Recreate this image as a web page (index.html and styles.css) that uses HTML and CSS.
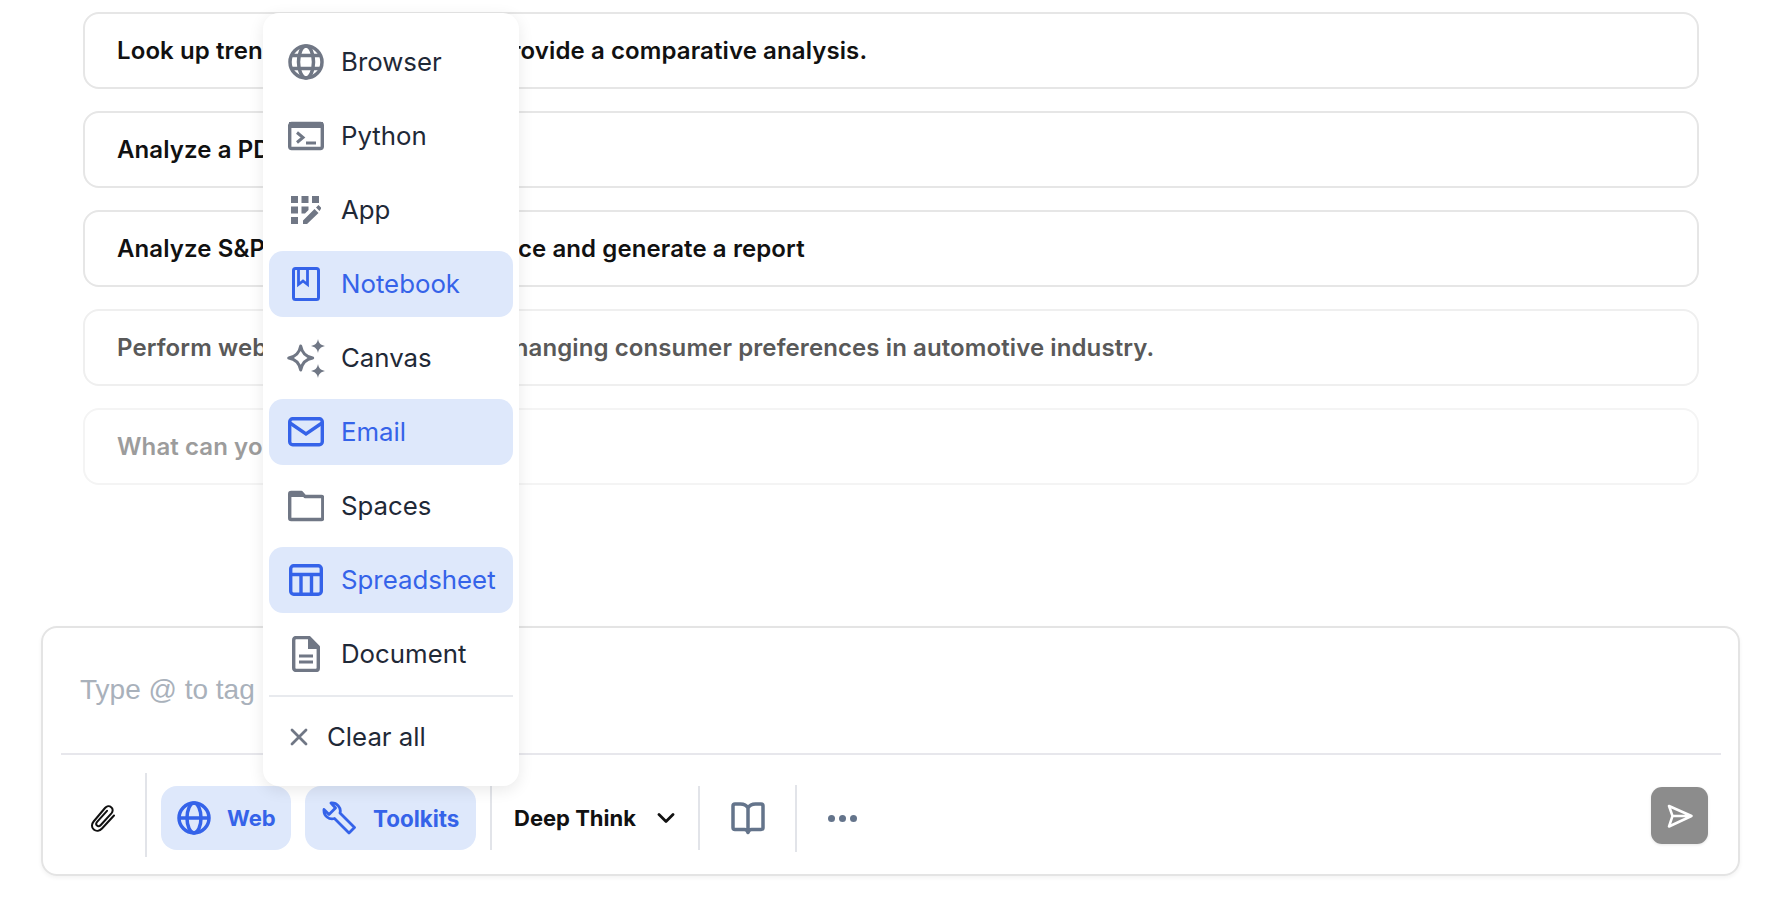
FILE: index.html
```html
<!DOCTYPE html>
<html lang="en">
<head>
<meta charset="utf-8">
<title>Chat composer</title>
<link rel="stylesheet" href="styles.css">
</head>
<body>
<main class="page">
  <section class="suggestions">
    <div class="card"><span class="card-text">Look up trends in EV stocks and provide a comparative analysis.</span></div>
    <div class="card"><span class="card-text">Analyze a PDF report</span></div>
    <div class="card"><span class="card-text">Analyze S&amp;P 500 stock performance and generate a report</span></div>
    <div class="card fade-1"><span class="card-text">Perform web research about the changing consumer preferences in automotive industry.</span></div>
    <div class="card fade-2"><span class="card-text">What can you do?</span></div>
  </section>

  <section class="composer">
    <div class="input-area"><span class="placeholder">Type @ to tag</span></div>
    <div class="toolbar">
      <button class="icon-btn clip" aria-label="Attach">
        <svg class="i-clip" viewBox="0 0 26 28" fill="none" stroke="#111" stroke-width="2" stroke-linecap="round" stroke-linejoin="round"><path d="M24 11.500 12 24.500c-2.300 2.500-5.800 3-8.200 1-2.400-2-2.400-5.500-.2-8L15 4c1.700-2 4.300-2.400 6.200-.8 1.900 1.500 1.900 4.100.2 6.100L10.800 21c-1.100 1.300-2.700 1.600-3.800.6-1.100-1-1-2.500.1-3.800L17 6.800"/></svg>
      </button>
      <span class="sep sep-tall"></span>
      <button class="pill web">
        <svg class="i-web" viewBox="0 0 34 34" fill="none" stroke="currentColor" stroke-width="3.500"><circle cx="17" cy="17" r="15"/><ellipse cx="17" cy="17" rx="7" ry="15"/><path d="M2 17h30"/></svg>
        <span>Web</span>
      </button>
      <button class="pill toolkits">
        <svg class="i-wrench" viewBox="0 0 34 34" fill="none" stroke="currentColor" stroke-width="2.800" stroke-linejoin="round"><path d="M18 12 32.500 26.500 27 32 12.500 17.500C7 19 1.500 15 2 8.500L7 13.500 13.500 7 9 2C15 1.500 19.500 7 18 12Z"/></svg>
        <span>Toolkits</span>
      </button>
      <span class="sep sep-a"></span>
      <button class="model">
        <span>Deep Think</span>
        <svg class="i-chev" viewBox="0 0 18 10" fill="none" stroke="#111" stroke-width="2.800" stroke-linecap="round" stroke-linejoin="round"><path d="m2 1.500 7 7 7-7"/></svg>
      </button>
      <span class="sep sep-b"></span>
      <button class="icon-btn book" aria-label="Library">
        <svg class="i-book" viewBox="0 0 34 33" fill="none" stroke="#64748b" stroke-width="3.500" stroke-linejoin="round"><path d="M17 6C15.500 3.300 13 2 9.500 2H4c-1.200 0-2 .8-2 2v21.500c0 1.200.8 2 2 2h9.500c1.800 0 3 .8 3.500 3 .5-2.200 1.700-3 3.500-3H30c1.200 0 2-.8 2-2V4c0-1.200-.8-2-2-2h-5.500C21 2 18.500 3.300 17 6Zm0 0v24"/></svg>
      </button>
      <span class="sep sep-c"></span>
      <button class="icon-btn more" aria-label="More">
        <span class="dot"></span><span class="dot"></span><span class="dot"></span>
      </button>
      <button class="send" aria-label="Send">
        <svg class="i-send" viewBox="0 0 26 24" fill="none" stroke="#fff" stroke-width="2.500" stroke-linecap="round" stroke-linejoin="round"><path d="M2 2 24.500 12 2 22.500 5.500 12ZM5.500 12h19"/></svg>
      </button>
    </div>
  </section>
</main>

<nav class="menu">
  <a class="item">
    <span class="ico"><svg class="s36" viewBox="0 0 36 36" fill="none" stroke="currentColor" stroke-width="3.500"><circle cx="18" cy="18" r="16"/><ellipse cx="18" cy="18" rx="7.500" ry="16"/><path d="M3.500 11.500h29M3.500 24.500h29"/></svg></span>
    <span class="label">Browser</span>
  </a>
  <a class="item">
    <span class="ico"><svg class="s36" viewBox="0 0 36 30" fill="none"><rect x="1.700" y="2.500" width="32.600" height="25" rx="2" stroke="currentColor" stroke-width="3.400"/><path d="M1 1h34v6H1z" fill="currentColor"/><path d="m9 11.500 6 5-6 5" stroke="currentColor" stroke-width="3"/><path d="M18 22h10" stroke="currentColor" stroke-width="3"/></svg></span>
    <span class="label">Python</span>
  </a>
  <a class="item">
    <span class="ico"><svg class="s30" viewBox="0 0 30 30" fill="currentColor"><path d="M0 1h7v7H0zM10.500 1h7v7h-7zM21 1h7v7h-7zM0 11.500h7v7H0zM10.500 11.500h7v3.500l-3.500 3.500h-3.500zM0 22h7v7H0z"/><path d="M12 29v-3.500L23.500 14l4 4L16 29zM25 12.500l2.500-2.500 3 3L28.500 16z"/></svg></span>
    <span class="label">App</span>
  </a>
  <a class="item active">
    <span class="ico"><svg class="s-note" viewBox="0 0 28 34" fill="none" stroke="currentColor"><rect x="1.500" y="1.500" width="25" height="31" rx="2" stroke-width="3"/><path d="M6.500 2v15.500l4.500-3.500 4.500 3.500V2" stroke-width="2.800"/></svg></span>
    <span class="label">Notebook</span>
  </a>
  <a class="item">
    <span class="ico"><svg class="s-spark" viewBox="0 0 38 38" fill="none"><path d="M13.700 7c1.200 6.500 4.500 10.800 12 12-7.500 1.200-10.800 5.500-12 12-1.200-6.500-4.500-10.800-12-12 7.500-1.200 10.800-5.500 12-12Z" stroke="currentColor" stroke-width="3" stroke-linejoin="round"/><path d="M31 0c.8 4 2.500 6 7 7-4.500 1-6.200 3-7 7-.8-4-2.500-6-7-7 4.500-1 6.200-3 7-7ZM31 25c.8 4 2.500 6 7 7-4.500 1-6.200 3-7 7-.8-4-2.500-6-7-7 4.500-1 6.200-3 7-7Z" fill="currentColor"/></svg></span>
    <span class="label">Canvas</span>
  </a>
  <a class="item active">
    <span class="ico"><svg class="s36" viewBox="0 0 36 30" fill="none" stroke="currentColor" stroke-width="3.400"><rect x="1.700" y="1.700" width="32.600" height="26" rx="3"/><path d="m2 6 16 11 16-11"/></svg></span>
    <span class="label">Email</span>
  </a>
  <a class="item">
    <span class="ico"><svg class="s36" viewBox="0 0 36 30" fill="none" stroke="currentColor" stroke-width="3.400" stroke-linejoin="round"><path d="M1.700 3c0-1 .5-1.500 1.500-1.500h10.300l3.500 4h16.300c1 0 1.500.5 1.500 1.500v20c0 1-.5 1.500-1.500 1.500H3.200c-1 0-1.500-.5-1.500-1.500Z"/><path d="M1 1.500h12.500l3.500 4.500H1z" fill="currentColor" stroke="none"/></svg></span>
    <span class="label">Spaces</span>
  </a>
  <a class="item active">
    <span class="ico"><svg class="s-sheet" viewBox="0 0 34 32" fill="none" stroke="currentColor" stroke-width="3.400"><rect x="1.700" y="1.700" width="30.600" height="28.600" rx="3"/><path d="M1.500 10.500h31M12 10.500v20M22.500 10.500v20"/></svg></span>
    <span class="label">Spreadsheet</span>
  </a>
  <a class="item">
    <span class="ico"><svg class="s-doc" viewBox="0 0 28 36" fill="none"><path d="M1.700 4c0-1.500 1-2.500 2.500-2.500H17L26.300 11v21c0 1.500-1 2.500-2.500 2.500H4.200c-1.500 0-2.500-1-2.500-2.500Z" stroke="currentColor" stroke-width="3.400" stroke-linejoin="round"/><path d="M16 1h2l9 9v3H16z" fill="currentColor"/><path d="M7 20h14M7 26h14" stroke="currentColor" stroke-width="3"/></svg></span>
    <span class="label">Document</span>
  </a>
  <hr class="rule">
  <a class="item clear">
    <svg class="s-x" viewBox="0 0 18 18" fill="none" stroke="currentColor" stroke-width="2.800" stroke-linecap="round"><path d="m2 2 14 14M16 2 2 16"/></svg>
    <span class="label">Clear all</span>
  </a>
</nav>
</body>
</html>
```
FILE: styles.css
```css
* { box-sizing: border-box; }
html, body { margin: 0; height: 100%; background: #fff; overflow: hidden; }
body { font-family: Inter, "Liberation Sans", sans-serif; position: relative; }
button { font: inherit; background: none; border: 0; padding: 0; cursor: pointer; }

.page { padding-top: 12px; }
.suggestions { margin-left: 83px; width: 1616px; display: flex; flex-direction: column; gap: 22px; }
.card {
  height: 77px; border: 2px solid #e6e6e6; border-radius: 16px; display: flex; align-items: center;
  padding-left: 32px; font-size: 24px; letter-spacing: .1px; font-weight: 600; color: #111;
  white-space: nowrap;
}
.fade-1 { border-color: #efefef; color: #595959; }
.fade-2 { border-color: #f4f4f4; color: #9c9c9c; }

.composer {
  margin: 141px 0 0 41px; width: 1699px; height: 250px; border: 2px solid #e4e4e4; border-radius: 16px;
  box-shadow: 0 2px 4px rgba(0,0,0,.05); display: flex; flex-direction: column;
}
.input-area { height: 125px; padding: 46px 0 0 37px; }
.placeholder { font-family: "Liberation Sans", Arial, sans-serif; font-size: 28px; color: #a9b1bb; }
.toolbar { flex: 1; margin: 0 17px 0 18px; border-top: 2px solid #e7e7ec; display: flex; align-items: flex-start; padding-top: 18px; }
.sep { width: 2px; background: #e2e4e9; flex: none; height: 64px; margin-top: 13px; }
.sep-tall { height: 84px; margin-top: 0; margin-left: 1px; }
.sep-a { margin-left: 14px; }
.sep-b { margin-left: 23px; }
.sep-c { margin-left: 30px; height: 67px; margin-top: 12px; }

.icon-btn { display: flex; align-items: center; justify-content: center; flex: none; }
.clip { width: 83px; height: 84px; margin-top: 3px; }
.i-clip { width: 26px; height: 28px; }
.pill {
  height: 64px; margin-top: 13px; border-radius: 16px; background: #dee8fb; color: #3563e9; display: flex; align-items: center;
  font-size: 22.400px; font-weight: 700; flex: none;
}
.web { width: 130px; margin-left: 14px; padding-left: 16px; gap: 16px; font-size: 22px; }
.toolkits { width: 171px; margin-left: 14px; padding-left: 17px; gap: 17px; }
.i-web, .i-wrench { width: 34px; height: 34px; flex: none; }
.model { display: flex; align-items: center; margin-top: 13px; height: 64px; margin-left: 22px; font-size: 22px; font-weight: 700; color: #111; gap: 21px; flex: none; }
.i-chev { width: 18px; height: 10px; }
.book { width: 34px; height: 64px; margin: 13px 0 0 31px; }
.i-book { width: 34px; height: 33px; }
.more { gap: 4px; height: 64px; margin: 13px 0 0 31px; }
.dot { width: 7px; height: 7px; border-radius: 50%; background: #64748b; }
.send { margin: 14px 13px 0 auto; width: 57px; height: 57px; border-radius: 11px; background: #8c8c8c; display: flex; align-items: center; justify-content: center; box-shadow: 0 1px 3px rgba(0,0,0,.1); flex: none; }
.i-send { width: 26px; height: 24px; }

.menu {
  position: absolute; left: 263px; top: 13px; width: 256px; height: 773px; padding: 16px 6px; background: #fff; border-radius: 16px;
  box-shadow: 0 4px 16px rgba(0,0,0,.09); display: flex; flex-direction: column; gap: 8px;
}
.item { height: 66px; flex: none; padding-left: 19px; display: flex; align-items: center; gap: 17px; border-radius: 14px; font-size: 25.800px; color: #1f2937; }
.label { margin-top: -2px; }
.ico { width: 36px; height: 36px; display: flex; align-items: center; justify-content: center; color: #707785; flex: none; }
.active { background: #dee8fb; color: #3563e9; }
.active .ico { color: #3563e9; }
.s36 { width: 36px; height: 36px; }
.s30 { width: 30px; height: 30px; }
.s-note { width: 28px; height: 34px; }
.s-spark { width: 38px; height: 38px; flex: none; overflow: visible; }
.s-sheet { width: 34px; height: 32px; }
.s-doc { width: 28px; height: 36px; }
.rule { width: 100%; margin: 0; border: 0; border-top: 2px solid #e8eaee; }
.clear { gap: 19px; padding-left: 21px; margin-top: -1px; }
.s-x { width: 18px; height: 18px; color: #707785; flex: none; }
```
